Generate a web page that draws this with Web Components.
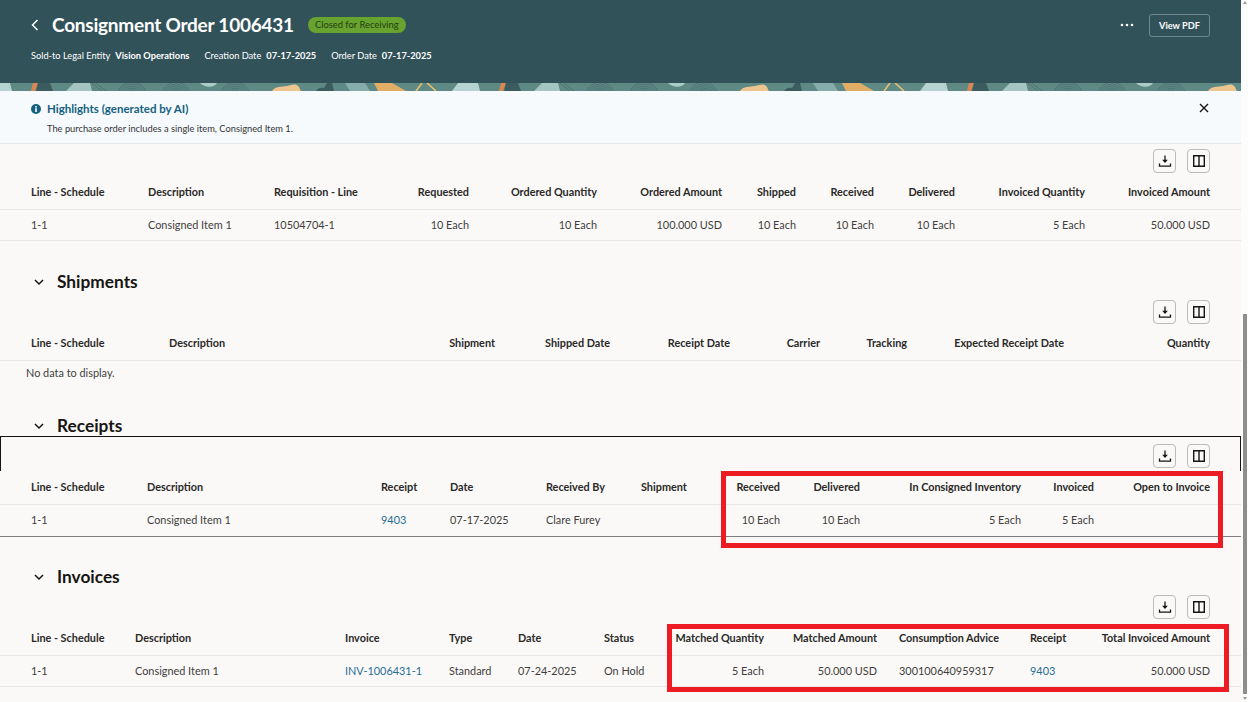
<!DOCTYPE html>
<html lang="en">
<head>
<meta charset="utf-8">
<title>Consignment Order 1006431</title>
<style>
    html, body { margin: 0; height: 702px; overflow: hidden; background: #fbf9f8; }
    body { font-family: Lato, "Noto Sans", sans-serif; color: #2f2d2b; }
</style>
</head>
<body>
<order-app>
    <order-header slot="header"></order-header>
    <highlights-bar slot="header"></highlights-bar>

    <data-table cols="117 126 106 89 128 125 74 78 81 130 125">
        <t-row head>
            <t-cell>Line - Schedule</t-cell><t-cell>Description</t-cell><t-cell>Requisition - Line</t-cell>
            <t-cell end>Requested</t-cell><t-cell end>Ordered Quantity</t-cell><t-cell end>Ordered Amount</t-cell>
            <t-cell end>Shipped</t-cell><t-cell end>Received</t-cell><t-cell end>Delivered</t-cell>
            <t-cell end>Invoiced Quantity</t-cell><t-cell end>Invoiced Amount</t-cell>
        </t-row>
        <t-row>
            <t-cell>1-1</t-cell><t-cell>Consigned Item 1</t-cell><t-cell>10504704-1</t-cell>
            <t-cell end>10 Each</t-cell><t-cell end>10 Each</t-cell><t-cell end>100.000 USD</t-cell>
            <t-cell end>10 Each</t-cell><t-cell end>10 Each</t-cell><t-cell end>10 Each</t-cell>
            <t-cell end>5 Each</t-cell><t-cell end>50.000 USD</t-cell>
        </t-row>
    </data-table>

    <order-section title="Shipments" style="margin-top:26px">
        <data-table cols="138 231 95 115 120 90 87 157 146">
            <t-row head>
                <t-cell>Line - Schedule</t-cell><t-cell>Description</t-cell>
                <t-cell end>Shipment</t-cell><t-cell end>Shipped Date</t-cell><t-cell end>Receipt Date</t-cell>
                <t-cell end>Carrier</t-cell><t-cell end>Tracking</t-cell>
                <t-cell end>Expected Receipt Date</t-cell><t-cell end>Quantity</t-cell>
            </t-row>
            <t-row empty><t-cell>No data to display.</t-cell></t-row>
        </data-table>
    </order-section>

    <order-section title="Receipts" framed>
        <data-table cols="116 234 69 96 95 59 80 80 161 73 116">
            <t-row head>
                <t-cell>Line - Schedule</t-cell><t-cell>Description</t-cell><t-cell>Receipt</t-cell>
                <t-cell>Date</t-cell><t-cell>Received By</t-cell><t-cell>Shipment</t-cell>
                <t-cell end>Received</t-cell><t-cell end>Delivered</t-cell>
                <t-cell end>In Consigned Inventory</t-cell><t-cell end>Invoiced</t-cell><t-cell end>Open to Invoice</t-cell>
            </t-row>
            <t-row last>
                <t-cell>1-1</t-cell><t-cell>Consigned Item 1</t-cell><t-cell link>9403</t-cell>
                <t-cell>07-17-2025</t-cell><t-cell>Clare Furey</t-cell><t-cell></t-cell>
                <t-cell end>10 Each</t-cell><t-cell end>10 Each</t-cell>
                <t-cell end>5 Each</t-cell><t-cell end>5 Each</t-cell><t-cell end></t-cell>
            </t-row>
        </data-table>
    </order-section>

    <order-section title="Invoices" style="margin-top:25px">
        <data-table cols="104 210 104 69 86 70 90 113 153 60 120">
            <t-row head>
                <t-cell>Line - Schedule</t-cell><t-cell>Description</t-cell><t-cell>Invoice</t-cell>
                <t-cell>Type</t-cell><t-cell>Date</t-cell><t-cell>Status</t-cell>
                <t-cell end>Matched Quantity</t-cell><t-cell end>Matched Amount</t-cell>
                <t-cell inset>Consumption Advice</t-cell><t-cell>Receipt</t-cell><t-cell end>Total Invoiced Amount</t-cell>
            </t-row>
            <t-row>
                <t-cell>1-1</t-cell><t-cell>Consigned Item 1</t-cell><t-cell link>INV-1006431-1</t-cell>
                <t-cell>Standard</t-cell><t-cell>07-24-2025</t-cell><t-cell>On Hold</t-cell>
                <t-cell end>5 Each</t-cell><t-cell end>50.000 USD</t-cell>
                <t-cell inset>300100640959317</t-cell><t-cell link>9403</t-cell><t-cell end>50.000 USD</t-cell>
            </t-row>
        </data-table>
    </order-section>

    <mark-box style="left:721px;top:471px;width:502px;height:77px"></mark-box>
    <mark-box style="left:667px;top:624px;width:562px;height:68px"></mark-box>
</order-app>

<script>
const FONT = 'Lato, "Noto Sans", sans-serif';

class OrderApp extends HTMLElement {
    constructor() {
        super();
        this.attachShadow({ mode: 'open' });
        this.shadowRoot.innerHTML = `
            <style>
                :host { display: flex; position: relative; width: 1248px; height: 702px; overflow: hidden; }
                .page { width: 1241px; flex: none; }
                .content { padding-top: 5px; }
                .bar { width: 7px; flex: none; background: #fcfcfc; display: flex; flex-direction: column; align-items: center; }
                .up, .down { width: 0; height: 0; border: 2.5px solid transparent; }
                .up { border-bottom: 3px solid #9a9a9a; border-top: 0; margin-top: 1px; }
                .thumb { width: 4px; margin: 310px 0 0 1px; height: 380px; background: #8e8e8e; }
                .down { border-top: 3px solid #9a9a9a; border-bottom: 0; margin-top: 3px; }
            </style>
            <div class="page">
                <slot name="header"></slot>
                <div class="content"><slot></slot></div>
            </div>
            <div class="bar"><span class="up"></span><span class="thumb"></span><span class="down"></span></div>
        `;
    }
}
customElements.define('order-app', OrderApp);

class OrderHeader extends HTMLElement {
    constructor() {
        super();
        this.attachShadow({ mode: 'open' });
        this.shadowRoot.innerHTML = `
            <style>
                :host { display: block; color: #fff; font-family: ${FONT}; }
                .top { background: #32525a; height: 83px; box-sizing: border-box; padding: 13px 31px 0 31px; }
                .title { display: flex; align-items: center; height: 24px; }
                .back { width: 8px; height: 12px; margin-right: 13px; }
                h1 { margin: 0; font-size: 19px; letter-spacing: -.23px; font-weight: 700; line-height: 24px; white-space: nowrap; }
                .badge { margin-left: 14px; height: 16px; line-height: 16px; padding: 0 7px; border-radius: 8px;
                    background: #69a32f; color: #1d3f12; font-size: 9.4px; white-space: nowrap; }
                .spacer { flex: 1; }
                .more { width: 14px; height: 4px; margin-right: 15px; }
                .pdf { width: 61px; height: 23px; box-sizing: border-box; border: 1px solid #6f8a8f; border-radius: 3px;
                    font-size: 9.2px; font-weight: 700; display: flex; align-items: center; justify-content: center; }
                .meta { display: flex; gap: 15px; margin-top: 12px; font-size: 9.25px; line-height: 14px; white-space: nowrap; }
                .meta b { font-weight: 700; margin-left: 5px; }
                svg.art { display: block; }
            </style>
            <div class="top">
                <div class="title">
                    <svg class="back" viewBox="0 0 8 12"><path d="M6.5 1 1.5 6l5 5" fill="none" stroke="#fff" stroke-width="1.5"/></svg>
                    <h1>Consignment Order 1006431</h1>
                    <span class="badge">Closed for Receiving</span>
                    <span class="spacer"></span>
                    <svg class="more" viewBox="0 0 14 4"><circle cx="2" cy="2" r="1.3" fill="#fff"/><circle cx="7" cy="2" r="1.3" fill="#fff"/><circle cx="12" cy="2" r="1.3" fill="#fff"/></svg>
                    <span class="pdf">View PDF</span>
                </div>
                <div class="meta">
                    <span>Sold-to Legal Entity<b>Vision Operations</b></span>
                    <span>Creation Date<b>07-17-2025</b></span>
                    <span>Order Date<b>07-17-2025</b></span>
                </div>
            </div>
            <svg class="art" width="1241" height="8" viewBox="0 0 1241 8">
                <defs>
                    <pattern id="leaf" width="468" height="8" patternUnits="userSpaceOnUse">
                        <rect width="468" height="8" fill="#5f8985"/>
                        <polygon points="0,0 10,0 12,8 0,8" fill="#b6d2d2"/>
                        <polygon points="452,8 458,0 468,0 468,8" fill="#b6d2d2"/>
                        <polygon points="33,0 38,0 35,8 31,8" fill="#d98650"/>
                        <polygon points="38,0 50,0 53,8 36,8" fill="#3c5b5e"/>
                        <polygon points="74,0 90,0 92,8 66,8" fill="#a4c5c3"/>
                        <g fill="none" stroke="#3f6364" stroke-width=".6">
                            <path d="M92 0l10 8M96 0l10 8"/>
                            <circle cx="132" cy="14" r="7"/><circle cx="132" cy="14" r="9"/><circle cx="132" cy="14" r="11"/><circle cx="132" cy="14" r="13"/><circle cx="132" cy="14" r="15"/>
                            <circle cx="176" cy="14" r="7"/><circle cx="176" cy="14" r="9"/><circle cx="176" cy="14" r="11"/><circle cx="176" cy="14" r="13"/><circle cx="176" cy="14" r="15"/>
                            <circle cx="235" cy="14" r="7"/><circle cx="235" cy="14" r="9"/><circle cx="235" cy="14" r="11"/><circle cx="235" cy="14" r="13"/><circle cx="235" cy="14" r="15"/>
                        </g>
                        <path d="M200 0h17c-3 5-12 5-17 0z" fill="#a9cbc9"/>
                        <path d="M272 8c3-5 10-4 15-5s8-3 11 0 1 3 3 5z" fill="#eec48f"/>
                        <path d="M316 8c2-3 5-4 8-3l3-5h5l2 8z" fill="#3c5b5e"/>
                        <polygon points="345,0 365,0 370,8 350,8" fill="#86adac"/>
                        <polygon points="374,0 392,0 406,8 378,8" fill="#e2ae66"/>
                        <path d="M422 0l-6 8M427 0l9 8" fill="none" stroke="#e9bf6e" stroke-width="1.6"/>
                    </pattern>
                </defs>
                <rect width="1241" height="8" fill="url(#leaf)"/>
            </svg>
        `;
    }
}
customElements.define('order-header', OrderHeader);

class HighlightsBar extends HTMLElement {
    constructor() {
        super();
        this.attachShadow({ mode: 'open' });
        this.shadowRoot.innerHTML = `
            <style>
                :host { display: block; font-family: ${FONT}; }
                .box { height: 53px; box-sizing: border-box; background: #f6fafd; border-bottom: 1px solid #e6e7e8;
                    padding: 10px 31px 0 31px; display: grid; grid-template-columns: 16px 1fr 12px; }
                .info { width: 10px; height: 10px; margin-top: 3px; }
                .head { color: #14607f; font-size: 11.5px; font-weight: 700; line-height: 16px; }
                .text { grid-column: 2; color: #333; font-size: 9.3px; line-height: 14px; margin-top: -2px; }
                .close { width: 12px; height: 12px; margin: 1px 0 0 0; grid-column: 3; grid-row: 1; }
            </style>
            <div class="box">
                <svg class="info" viewBox="0 0 10 10"><circle cx="5" cy="5" r="5" fill="#14607f"/><rect x="4.2" y="4.2" width="1.6" height="3.8" fill="#fff"/><rect x="4.2" y="2" width="1.6" height="1.5" fill="#fff"/></svg>
                <div class="head">Highlights (generated by AI)</div>
                <div class="text">The purchase order includes a single item, Consigned Item 1.</div>
                <svg class="close" viewBox="0 0 12 12"><path d="M2 2l8 8M10 2l-8 8" stroke="#161513" stroke-width="1.4" fill="none"/></svg>
            </div>
        `;
    }
}
customElements.define('highlights-bar', HighlightsBar);

class OrderSection extends HTMLElement {
    constructor() {
        super();
        this.attachShadow({ mode: 'open' });
        this.shadowRoot.innerHTML = `
            <style>
                :host { display: block; margin-top: 27px; position: relative; font-family: ${FONT}; }
                .head { height: 29px; display: flex; align-items: center; padding-left: 33px; margin-bottom: 4px; }
                .chev { width: 12px; height: 8px; margin-right: 12px; }
                h2 { margin: 0; font-size: 17.3px; font-weight: 700; color: #161513; line-height: 29px; }
                .frame { display: none; position: absolute; left: 0; right: 0; top: 25px; height: 34px;
                    border: 1px solid #161513; border-bottom: 0; pointer-events: none; }
                :host([framed]) .frame { display: block; }
            </style>
            <div class="head">
                <svg class="chev" viewBox="0 0 12 8"><path d="M2 2l4 4 4-4" fill="none" stroke="#161513" stroke-width="1.5"/></svg>
                <h2></h2>
            </div>
            <slot></slot>
            <div class="frame"></div>
        `;
        this.shadowRoot.querySelector('h2').textContent = this.getAttribute('title');
        this.removeAttribute('title');
    }
}
customElements.define('order-section', OrderSection);

class DataTable extends HTMLElement {
    constructor() {
        super();
        this.attachShadow({ mode: 'open' });
        this.shadowRoot.innerHTML = `
            <style>
                :host { display: block; font-family: ${FONT}; }
                .tools { display: flex; justify-content: flex-end; gap: 11px; padding-right: 31px; height: 24px; }
                button { width: 23px; height: 24px; padding: 0; box-sizing: border-box; background: transparent;
                    border: 1px solid #bdbbb8; border-radius: 4px; display: flex; align-items: center; justify-content: center; }
                svg { width: 14px; height: 14px; display: block; }
            </style>
            <div class="tools">
                <button aria-label="Download"><svg viewBox="0 0 14 14"><path d="M7 1.5v6.5" stroke="#161513" stroke-width="1.3"/><path d="M4.2 5.8 7 9l2.8-3.2z" fill="#161513"/><path d="M1.5 9.5v2.7h11V9.5" fill="none" stroke="#161513" stroke-width="1.3"/></svg></button>
                <button aria-label="Columns"><svg viewBox="0 0 14 14"><path d="M1.7 1.7h10.6v10.6H1.7zM7 1.7v10.6" fill="none" stroke="#161513" stroke-width="1.4"/></svg></button>
            </div>
            <slot></slot>
        `;
    }
    connectedCallback() {
        const cols = this.getAttribute('cols').split(' ').map(c => c + 'px').join(' ');
        this.style.setProperty('--cols', cols);
    }
}
customElements.define('data-table', DataTable);

class TRow extends HTMLElement {
    constructor() {
        super();
        this.attachShadow({ mode: 'open' });
        this.shadowRoot.innerHTML = `
            <style>
                :host { display: grid; grid-template-columns: var(--cols); padding: 0 31px 2px; height: 31px; box-sizing: border-box;
                    align-items: center; border-bottom: 1px solid #e9e7e5; font-size: 10.9px; color: #403e3c; white-space: nowrap; }
                :host([head]) { height: 37px; padding-top: 2px; padding-bottom: 1px; font-weight: 700; font-size: 10.85px; color: #2a2927; }
                :host([empty]) { display: block; height: 23px; border-bottom: 0; padding: 5px 0 0 26px; }
                :host([last]) { height: 32px; padding-bottom: 3px; border-bottom: 1px solid #7e7d7b; }
            </style>
            <slot></slot>
        `;
    }
}
customElements.define('t-row', TRow);

class TCell extends HTMLElement {
    constructor() {
        super();
        this.attachShadow({ mode: 'open' });
        this.shadowRoot.innerHTML = `
            <style>
                :host { display: block; }
                :host([end]) { text-align: right; }
                :host([link]) { color: #1f6c94; }
                :host([inset]) { padding-left: 22px; }
            </style>
            <slot></slot>
        `;
    }
}
customElements.define('t-cell', TCell);

class MarkBox extends HTMLElement {
    constructor() {
        super();
        this.attachShadow({ mode: 'open' });
        this.shadowRoot.innerHTML = `
            <style>
                :host { display: block; position: absolute; box-sizing: border-box; border: 5px solid #ed1c24; pointer-events: none; }
            </style>
        `;
    }
}
customElements.define('mark-box', MarkBox);
</script>
</body>
</html>
